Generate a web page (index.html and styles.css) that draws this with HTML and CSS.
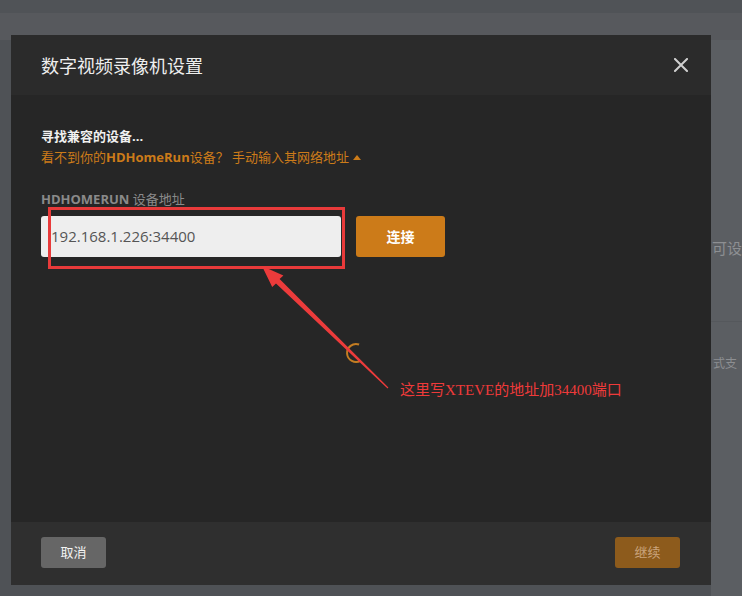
FILE: index.html
```html
<!DOCTYPE html>
<html lang="zh-CN">
<head>
<meta charset="utf-8">
<title>数字视频录像机设置</title>
<link rel="stylesheet" href="styles.css">
</head>
<body>
<div class="page">
  <div class="topbar"></div>
  <div class="main">
    <div class="gutter"></div>
    <div class="side">
      <div class="side-a">可设</div>
      <div class="side-line"></div>
      <div class="side-b">式支</div>
    </div>
  </div>
</div>

<div class="modal">
  <div class="modal-header">
    <h1 class="modal-title">数字视频录像机设置</h1>
    <svg class="close" width="14" height="14" viewBox="0 0 14 14"><path d="M1 1 L13 13 M13 1 L1 13" stroke="#d0d0d0" stroke-width="2" stroke-linecap="square"/></svg>
  </div>
  <div class="modal-body">
    <div class="searching">寻找兼容的设备...</div>
    <div class="manual">看不到你的<b>HDHomeRun</b>设备？ 手动输入其网络地址 <span class="tri"></span></div>
    <div class="field-label"><b>HDHOMERUN</b> 设备地址</div>
    <div class="field-row">
      <div class="input">192.168.1.226:34400</div>
      <div class="btn-connect">连接</div>
    </div>
  </div>
  <div class="modal-footer">
    <div class="btn btn-cancel">取消</div>
    <div class="btn btn-continue">继续</div>
  </div>
</div>

<div class="mark-rect"></div>
<svg class="mark-svg" width="742" height="596" viewBox="0 0 742 596">
  <path d="M359.1 344.5 A9 9 0 1 0 360.5 360.8" fill="none" stroke="#c47d22" stroke-width="2"/>
  <polygon fill="#ec3b3b" points="262,266 283.4,275.6 279.6,279.1 388.4,387.6 387.6,388.4 276,283.5 272.2,287"/>
</svg>
<div class="mark-text">这里写XTEVE的地址加34400端口</div>
</body>
</html>
```

FILE: styles.css
```css
* { box-sizing: border-box; }
html, body { margin: 0; padding: 0; }
body {
  width: 742px;
  height: 596px;
  overflow: hidden;
  position: relative;
  font-family: "Open Sans", "Noto Sans CJK SC", sans-serif;
  background: #54575b;
}

.page { height: 596px; display: flex; flex-direction: column; }
.topbar { height: 40px; background: linear-gradient(#505357 0, #505357 13px, #57595d 13px); }
.main { flex: 1; display: flex; }
.gutter { flex: 1; background: #4f5256; }
.side {
  width: 31px;
  background: #5b5e62;
  white-space: nowrap;
  color: #8d8f92;
  padding-top: 198px;
}
.side-a { font-size: 15px; line-height: 20px; padding-left: 1px; }
.side-line { height: 1px; background: #55585c; margin-top: 63px; }
.side-b { font-size: 12px; line-height: 18px; margin-top: 33px; padding-left: 2px; }

.modal {
  position: absolute;
  left: 11px;
  top: 35px;
  width: 700px;
  height: 550px;
  display: flex;
  flex-direction: column;
  background: #262626;
}
.modal-header {
  height: 60px;
  background: #2b2b2b;
  display: flex;
  align-items: center;
  justify-content: space-between;
  padding: 0 23px 0 30px;
}
.modal-title {
  margin: 0;
  font-size: 18px;
  line-height: 24px;
  font-weight: normal;
  color: #eeeeee;
  padding-top: 2px;
}
.close { display: block; margin-top: -1px; }

.modal-body {
  flex: 1;
  padding: 31px 30px 0;
}
.searching {
  font-size: 13px;
  line-height: 21px;
  font-weight: bold;
  color: #f0f0f0;
}
.manual {
  font-size: 13px;
  line-height: 21px;
  color: #cc7b19;
}
.manual b { font-weight: bold; }
.tri {
  display: inline-block;
  width: 0; height: 0;
  border-left: 4px solid transparent;
  border-right: 4px solid transparent;
  border-bottom: 5px solid #cc7b19;
  vertical-align: 2px;
  margin-left: 1px;
}
.field-label {
  margin-top: 21px;
  font-size: 13px;
  line-height: 21px;
  color: #8a8a8a;
}
.field-label b { font-weight: bold; }
.field-row {
  margin-top: 6px;
  display: flex;
  gap: 15px;
}
.input {
  width: 300px;
  height: 41px;
  background: #eeeeee;
  border-radius: 3px;
  color: #555555;
  font-size: 15px;
  line-height: 41px;
  padding-left: 10px;
}
.btn-connect {
  width: 89px;
  height: 41px;
  background: #cc7b19;
  border-radius: 3px;
  color: #ffffff;
  font-size: 14px;
  font-weight: bold;
  line-height: 41px;
  text-align: center;
}

.modal-footer {
  height: 63px;
  background: #2f2f2f;
  display: flex;
  justify-content: space-between;
  align-items: flex-start;
  padding: 15px 31px 0 30px;
}
.btn {
  width: 65px;
  height: 31px;
  border-radius: 3px;
  font-size: 13px;
  line-height: 31px;
  text-align: center;
}
.btn-cancel { background: #666666; color: #f4f4f4; }
.btn-continue { background: #8d5b1c; color: #caa47c; }

.mark-rect {
  position: absolute;
  left: 48px;
  top: 207px;
  width: 297px;
  height: 62px;
  border: 3px solid #e83a3a;
}
.mark-svg {
  position: absolute;
  left: 0;
  top: 0;
  pointer-events: none;
}
.mark-text {
  position: absolute;
  left: 400px;
  top: 380px;
  font-family: "Liberation Serif", "Noto Sans CJK SC", serif;
  font-size: 15px;
  line-height: 20px;
  color: #ee3a3a;
  white-space: nowrap;
}
```
